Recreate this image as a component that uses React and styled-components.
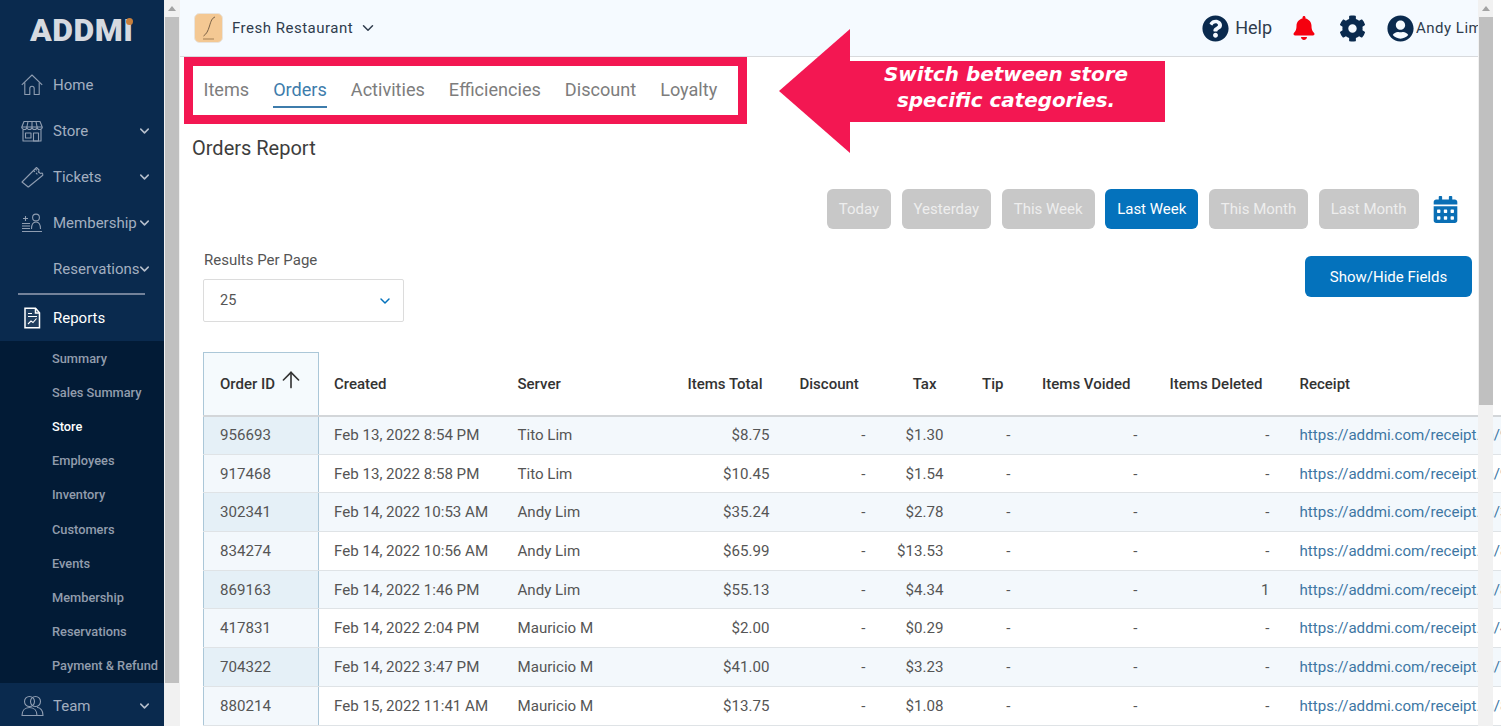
import React from 'react';
import styled, { createGlobalStyle } from 'styled-components';
import { ChevronDown, ArrowUp } from 'lucide-react';
import { FaQuestionCircle, FaBell, FaCog, FaUserCircle, FaCalendarAlt } from 'react-icons/fa';

const GlobalStyle = createGlobalStyle`
  html, body {
    margin: 0;
    height: 100%;
    overflow: hidden;
    background: #fff;
    font-family: Roboto, "Liberation Sans", sans-serif;
  }
  * { box-sizing: border-box; }
`;

const Page = styled.div`
  display: flex;
  width: 1501px;
  height: 726px;
  overflow: hidden;
`;

/* sidebar */
const Aside = styled.aside`
  display: flex;
  flex: 0 0 180px;
  height: 726px;
`;

const Nav = styled.nav`
  width: 164px;
  height: 726px;
  background: #0a2a4e;
  display: flex;
  flex-direction: column;
  overflow: hidden;
`;

const Logo = styled.div`
  position: relative;
  flex: none;
  height: 62px;
  padding: 12px 0 0 30px;
  font-size: 32px;
  line-height: 36px;
  font-weight: 900;
  letter-spacing: 0.5px;
  color: #d6dae0;
`;

const LogoDot = styled.span`
  position: absolute;
  left: 126px;
  top: 18px;
  width: 7px;
  height: 7px;
  border-radius: 50%;
  background: #c77f3c;
`;

const NavRow = styled.div`
  position: relative;
  flex: none;
  display: flex;
  align-items: center;
  height: 46px;
  padding-left: 53px;
  font-size: 15px;
  color: ${p => (p.$active ? '#fff' : '#a3afc0')};
`;

const NavIcon = styled.span`
  position: absolute;
  left: 21px;
  top: 50%;
  transform: translateY(-50%);
  display: flex;
  color: ${p => (p.$active ? '#fff' : '#8f9db1')};
`;

const NavChevron = styled(ChevronDown)`
  position: absolute;
  right: 12px;
  top: 50%;
  transform: translateY(-50%);
  color: #b4bdca;
`;

const NavDivider = styled.div`
  height: 2px;
  margin: 1px 19px 0 18px;
  background: #73829a;
  flex: none;
`;

const SubList = styled.div`
  flex: none;
  height: 342px;
  background: #021b36;
  display: flex;
  flex-direction: column;
`;

const SubItem = styled.div`
  height: 34.2px;
  display: flex;
  align-items: center;
  padding-left: 52px;
  font-size: 12.8px;
  font-weight: 500;
  white-space: nowrap;
  color: ${p => (p.$active ? '#fff' : '#929dad')};
`;

const SideScroll = styled.div`
  width: 16px;
  height: 726px;
  background: #f1f1f1;
  display: flex;
  flex-direction: column;
  align-items: center;
`;

const ScrollUp = styled.div`
  flex: none;
  height: 17px;
  width: 100%;
  display: flex;
  align-items: center;
  justify-content: center;

  &::before {
    content: '';
    border-left: 4px solid transparent;
    border-right: 4px solid transparent;
    border-bottom: 5px solid #a3a3a3;
  }
`;

const SideThumb = styled.div`
  width: 14px;
  height: 666px;
  background: #c0c0c0;
`;

/* main */
const Main = styled.main`
  position: relative;
  flex: 1;
  height: 726px;
  overflow: hidden;
  min-width: 0;
`;

const TopBar = styled.header`
  width: 1298px;
  height: 57px;
  background: #f5faff;
  border-bottom: 1px solid #d8dadd;
  display: flex;
  align-items: center;
  padding: 0 0 0 14px;
  overflow: hidden;
  white-space: nowrap;
`;

const StoreLogo = styled.svg`
  flex: none;
  width: 30px;
  height: 31px;
  margin-right: 8px;
`;

const StoreName = styled.span`
  font-size: 15px;
  letter-spacing: 0.5px;
  color: #2f3c4d;
`;

const StoreChevron = styled(ChevronDown)`
  margin-left: 6px;
  color: #2f3c4d;
`;

const TopRight = styled.div`
  margin-left: auto;
  display: flex;
  align-items: center;
`;

const HelpText = styled.span`
  margin: 0 20px 2px 6px;
  font-size: 18px;
  color: #2f3c4d;
`;

const UserName = styled.span`
  margin-left: 2px;
  font-size: 15px;
  letter-spacing: 0.5px;
  color: #2f3c4d;
  width: 62px;
  overflow: hidden;
`;

const GearIcon = styled(FaCog)`
  margin-left: 23px;
`;

const UserIcon = styled(FaUserCircle)`
  margin-left: 21px;
`;

const Tabs = styled.div`
  display: flex;
  gap: 24px;
  height: 55px;
  padding: 16px 0 0 23.5px;
`;

const Tab = styled.div`
  height: 36px;
  margin-top: -1px;
  padding-top: 7px;
  font-size: 18.1px;
  line-height: 21px;
  color: ${p => (p.$active ? '#3d7cab' : '#7d7d7d')};
  border-bottom: ${p => (p.$active ? '2px solid #3d7cab' : '0')};
`;

const Frame = styled.div`
  position: absolute;
  left: 4px;
  top: 57px;
  width: 563px;
  height: 67px;
  border: 9px solid #f31752;
  pointer-events: none;
`;

const Callout = styled.div`
  position: absolute;
  left: 599px;
  top: 29px;
  width: 386px;
  height: 124px;
  display: flex;
  align-items: center;
`;

const CalloutHead = styled.div`
  flex: none;
  width: 0;
  height: 0;
  border-top: 62px solid transparent;
  border-bottom: 62px solid transparent;
  border-right: 71px solid #f31752;
`;

const CalloutBody = styled.div`
  width: 315px;
  height: 61px;
  background: #f31752;
  color: #fff;
  font-family: "DejaVu Sans", sans-serif;
  font-style: italic;
  font-weight: 700;
  font-size: 19.9px;
  line-height: 26px;
  text-align: center;
  padding: 1px 3px 0 0;
`;

const Title = styled.h1`
  margin: 0;
  padding: 24px 0 0 12px;
  height: 54px;
  font-size: 20px;
  line-height: 24px;
  font-weight: 400;
  color: #3d3d3d;
`;

const Ranges = styled.div`
  display: flex;
  align-items: center;
  justify-content: flex-end;
  gap: 10.5px;
  height: 40px;
  margin-top: 23px;
  padding-right: 42px;
`;

const Range = styled.div`
  height: 40px;
  padding: 0 12px;
  display: flex;
  align-items: center;
  border-radius: 6px;
  font-size: 15px;
  color: ${p => (p.$active ? '#fff' : '#eeeeee')};
  background: ${p => (p.$active ? '#0472bc' : '#c8c8c8')};
`;

const CalendarIcon = styled(FaCalendarAlt)`
  margin-left: 3px;
  color: #0a6fb5;
`;

const Filters = styled.div`
  display: flex;
  justify-content: space-between;
  padding: 22px 29px 0 23px;
  height: 123px;
`;

const FilterLabel = styled.div`
  padding-left: 1px;
  font-size: 15px;
  line-height: 18px;
  color: #555;
`;

const Select = styled.div`
  margin-top: 10px;
  width: 201px;
  height: 43px;
  border: 1px solid #dcdcdc;
  border-radius: 2px;
  display: flex;
  align-items: center;
  justify-content: space-between;
  padding: 0 10px 0 16px;
  font-size: 14.5px;
  color: #555;
`;

const FieldsButton = styled.div`
  margin-top: 5px;
  width: 167px;
  height: 41px;
  border-radius: 6px;
  background: #0472bc;
  color: #fff;
  display: flex;
  align-items: center;
  justify-content: center;
  font-size: 15px;
`;

const TableWrap = styled.div`
  padding-left: 23px;
  width: 1321px;
  overflow: hidden;
`;

const Table = styled.table`
  table-layout: fixed;
  width: 1400px;
  border-collapse: collapse;
  font-size: 15.1px;
`;

const Th = styled.th`
  height: 63px;
  padding: 0 ${p => (p.$right ? 22 : 15)}px 0 15px;
  text-align: ${p => (p.$right ? 'right' : 'left')};
  font-size: 15px;
  font-weight: 500;
  color: #333;
  border-bottom: 2px solid #d3d6d9;
  white-space: nowrap;
  ${p => p.$sticky && `
    background: #f5fafd;
    border-left: 1px solid #abc7d8;
    border-right: 1px solid #abc7d8;
    border-top: 1px solid #abc7d8;
    padding-left: 16px;
  `}
`;

const SortLabel = styled.div`
  display: flex;
  align-items: center;
  height: 26px;
`;

const SortArrow = styled(ArrowUp)`
  flex: none;
  margin: -8px 0 0 3px;
  color: #333;
`;

const Td = styled.td`
  height: 38.7px;
  padding: 0 15px;
  text-align: ${p => (p.$right ? 'right' : 'left')};
  white-space: nowrap;
  overflow: ${p => (p.$link ? 'visible' : 'hidden')};
  color: ${p => (p.$link ? '#3d76a3' : '#555')};
  border-bottom: 1px solid #dfe3e6;
  background: ${p => (p.$odd ? '#f3f8fc' : '#fff')};
  ${p => p.$sticky && `
    background: ${p.$odd ? '#e5f0f7' : '#f3f8fc'};
    border-left: 1px solid #abc7d8;
    border-right: 1px solid #abc7d8;
    padding-left: 16px;
  `}
`;

const MainScroll = styled.div`
  position: absolute;
  left: 1298px;
  top: 0;
  width: 15px;
  height: 726px;
  background: #f1f1f1;
  display: flex;
  flex-direction: column;
  align-items: center;
`;

const MainThumb = styled.div`
  width: 14px;
  height: 388px;
  background: #c0c0c0;
`;

const HomeIcon = () => (
  <svg width="22" height="22" viewBox="0 0 22 22" fill="none" stroke="currentColor" strokeWidth="1.1" strokeLinejoin="round">
    <path d="M0.8 10.8 11 1l10.2 9.8" />
    <path d="M3.8 8.5V20.5h5v-6a2.2 2.2 0 0 1 4.4 0v6h5V8.5" />
  </svg>
);

const StoreIcon = () => (
  <svg width="22" height="22" viewBox="0 0 22 22" fill="none" stroke="currentColor" strokeWidth="1.1" strokeLinejoin="round">
    <path d="M3 1.5h16l2.2 5.5H.8z" />
    <path d="M.8 7a2.55 2.55 0 0 0 5.1 0 2.55 2.55 0 0 0 5.1 0 2.55 2.55 0 0 0 5.1 0 2.55 2.55 0 0 0 5.1 0" />
    <path d="M2 10v11h18V10" />
    <path d="M12.5 21v-8h5v8zM4.5 13h5.5v5H4.5z" />
    <path d="M7 1.5 5.9 7M11 1.5V7M15 1.5 16.1 7" />
  </svg>
);

const TicketIcon = () => (
  <svg width="23" height="22" viewBox="0 0 23 22" fill="none" stroke="currentColor" strokeWidth="1.1" strokeLinejoin="round">
    <path d="M1 16 15.5 1.5l2.5 2.5a2.2 2.2 0 0 0 3 3 2.2 2.2 0 0 1 .8 2.2L8 20.5a1 1 0 0 1-1.4 0L1 16z" />
    <path d="m12.5 4.5 5 5M14.5 3l5 5" strokeDasharray="2 1.5" />
  </svg>
);

const MembershipIcon = () => (
  <svg width="22" height="20" viewBox="0 0 22 20" fill="none" stroke="currentColor" strokeWidth="1.1">
    <path d="M1 18.5h20M1 15.5h8M1 13h8M1 10.5h8M4.5 3v5M2 5.5h5" />
    <circle cx="15" cy="4.5" r="3.4" />
    <path d="M10.5 16c0-4.5 1.8-7 4.5-7s4.5 2.5 4.5 7" />
  </svg>
);

const ReportsIcon = () => (
  <svg width="22" height="22" viewBox="0 0 22 22" fill="none" stroke="currentColor" strokeWidth="1.5">
    <path d="M4 1.2h10.5l4 4.5v15H4z" fill="#1f3d5e" />
    <path d="M14.5 1.2V6h4" />
    <path d="M7 6.5h4M7 9.5h9" strokeWidth="1" />
    <path d="M7 17l3-3 2 1.5 3.5-4" strokeWidth="1.1" />
  </svg>
);

const TeamIcon = () => (
  <svg width="23" height="21" viewBox="0 0 23 21" fill="none" stroke="currentColor" strokeWidth="1.1" strokeLinejoin="round">
    <circle cx="8.5" cy="6" r="5" />
    <circle cx="14.5" cy="6" r="5" />
    <path d="M1 20c0-4.5 2.5-8 7.5-8s7.5 3.5 7.5 8z" />
    <path d="M16 20h6c0-4.5-2-7.5-6-8.2" />
  </svg>
);

const navItems = [
  { label: 'Home', icon: <HomeIcon /> },
  { label: 'Store', icon: <StoreIcon />, more: true },
  { label: 'Tickets', icon: <TicketIcon />, more: true },
  { label: 'Membership', icon: <MembershipIcon />, more: true },
  { label: 'Reservations', more: true },
];

const subItems = ['Summary', 'Sales Summary', 'Store', 'Employees', 'Inventory', 'Customers', 'Events', 'Membership', 'Reservations', 'Payment & Refund'];

const rows = [
  ['956693', 'Feb 13, 2022 8:54 PM', 'Tito Lim', '$8.75', '$1.30', '-'],
  ['917468', 'Feb 13, 2022 8:58 PM', 'Tito Lim', '$10.45', '$1.54', '-'],
  ['302341', 'Feb 14, 2022 10:53 AM', 'Andy Lim', '$35.24', '$2.78', '-'],
  ['834274', 'Feb 14, 2022 10:56 AM', 'Andy Lim', '$65.99', '$13.53', '-'],
  ['869163', 'Feb 14, 2022 1:46 PM', 'Andy Lim', '$55.13', '$4.34', '1'],
  ['417831', 'Feb 14, 2022 2:04 PM', 'Mauricio M', '$2.00', '$0.29', '-'],
  ['704322', 'Feb 14, 2022 3:47 PM', 'Mauricio M', '$41.00', '$3.23', '-'],
  ['880214', 'Feb 15, 2022 11:41 AM', 'Mauricio M', '$13.75', '$1.08', '-'],
];

const colWidths = [115, 184, 169, 113, 96, 78, 67, 127, 132, 319];

const App = () => (
  <Page>
    <GlobalStyle />
    <Aside>
      <Nav>
        <Logo>
          ADDMI
          <LogoDot />
        </Logo>
        {navItems.map(item => (
          <NavRow key={item.label}>
            {item.icon && <NavIcon>{item.icon}</NavIcon>}
            {item.label}
            {item.more && <NavChevron size={15} strokeWidth={2.5} />}
          </NavRow>
        ))}
        <NavDivider />
        <NavRow $active>
          <NavIcon $active><ReportsIcon /></NavIcon>
          Reports
        </NavRow>
        <SubList>
          {subItems.map(label => (
            <SubItem key={label} $active={label === 'Store'}>{label}</SubItem>
          ))}
        </SubList>
        <NavRow>
          <NavIcon><TeamIcon /></NavIcon>
          Team
          <NavChevron size={15} strokeWidth={2.5} />
        </NavRow>
      </Nav>
      <SideScroll>
        <ScrollUp />
        <SideThumb />
      </SideScroll>
    </Aside>
    <Main>
      <TopBar>
        <StoreLogo viewBox="0 0 30 31">
          <rect x="0.5" y="0.5" width="28" height="29" rx="5" fill="#f4c893" stroke="#e8e4de" />
          <path d="M21 4c-3 1-4 4-5.5 9s-3 8-6 10" fill="none" stroke="#5b4632" strokeWidth="0.8" />
          <path d="M9 26h11" stroke="#b08a5e" strokeWidth="1.2" />
        </StoreLogo>
        <StoreName>Fresh Restaurant</StoreName>
        <StoreChevron size={18} strokeWidth={2} />
        <TopRight>
          <FaQuestionCircle size={27} color="#0a2a4e" />
          <HelpText>Help</HelpText>
          <FaBell size={24} color="#f5000f" />
          <GearIcon size={27} color="#0a2a4e" />
          <UserIcon size={27} color="#0a2a4e" />
          <UserName>Andy Lim</UserName>
        </TopRight>
      </TopBar>
      <Tabs>
        {['Items', 'Orders', 'Activities', 'Efficiencies', 'Discount', 'Loyalty'].map(t => (
          <Tab key={t} $active={t === 'Orders'}>{t}</Tab>
        ))}
      </Tabs>
      <Frame />
      <Callout>
        <CalloutHead />
        <CalloutBody>
          Switch between store
          <br />
          specific categories.
        </CalloutBody>
      </Callout>
      <Title>Orders Report</Title>
      <Ranges>
        <Range>Today</Range>
        <Range>Yesterday</Range>
        <Range>This Week</Range>
        <Range $active>Last Week</Range>
        <Range>This Month</Range>
        <Range>Last Month</Range>
        <CalendarIcon size={27} />
      </Ranges>
      <Filters>
        <div>
          <FilterLabel>Results Per Page</FilterLabel>
          <Select>
            25
            <ChevronDown size={16} strokeWidth={2.2} color="#0472bc" />
          </Select>
        </div>
        <FieldsButton>Show/Hide Fields</FieldsButton>
      </Filters>
      <TableWrap>
        <Table>
          <colgroup>
            {colWidths.map((w, i) => <col key={i} style={{ width: w }} />)}
          </colgroup>
          <thead>
            <tr>
              <Th $sticky>
                <SortLabel>Order ID<SortArrow size={26} strokeWidth={1.5} /></SortLabel>
              </Th>
              <Th>Created</Th>
              <Th>Server</Th>
              <Th $right>Items Total</Th>
              <Th $right>Discount</Th>
              <Th $right>Tax</Th>
              <Th $right>Tip</Th>
              <Th $right>Items Voided</Th>
              <Th $right>Items Deleted</Th>
              <Th>Receipt</Th>
            </tr>
          </thead>
          <tbody>
            {rows.map((r, i) => {
              const odd = i % 2 === 0;
              return (
                <tr key={r[0]}>
                  <Td $sticky $odd={odd}>{r[0]}</Td>
                  <Td $odd={odd}>{r[1]}</Td>
                  <Td $odd={odd}>{r[2]}</Td>
                  <Td $odd={odd} $right>{r[3]}</Td>
                  <Td $odd={odd} $right>-</Td>
                  <Td $odd={odd} $right>{r[4]}</Td>
                  <Td $odd={odd} $right>-</Td>
                  <Td $odd={odd} $right>-</Td>
                  <Td $odd={odd} $right>{r[5]}</Td>
                  <Td $odd={odd} $link>https://addmi.com/receipt.m/{r[0]}</Td>
                </tr>
              );
            })}
          </tbody>
        </Table>
      </TableWrap>
      <MainScroll>
        <ScrollUp />
        <MainThumb />
      </MainScroll>
    </Main>
  </Page>
);

export default App;
